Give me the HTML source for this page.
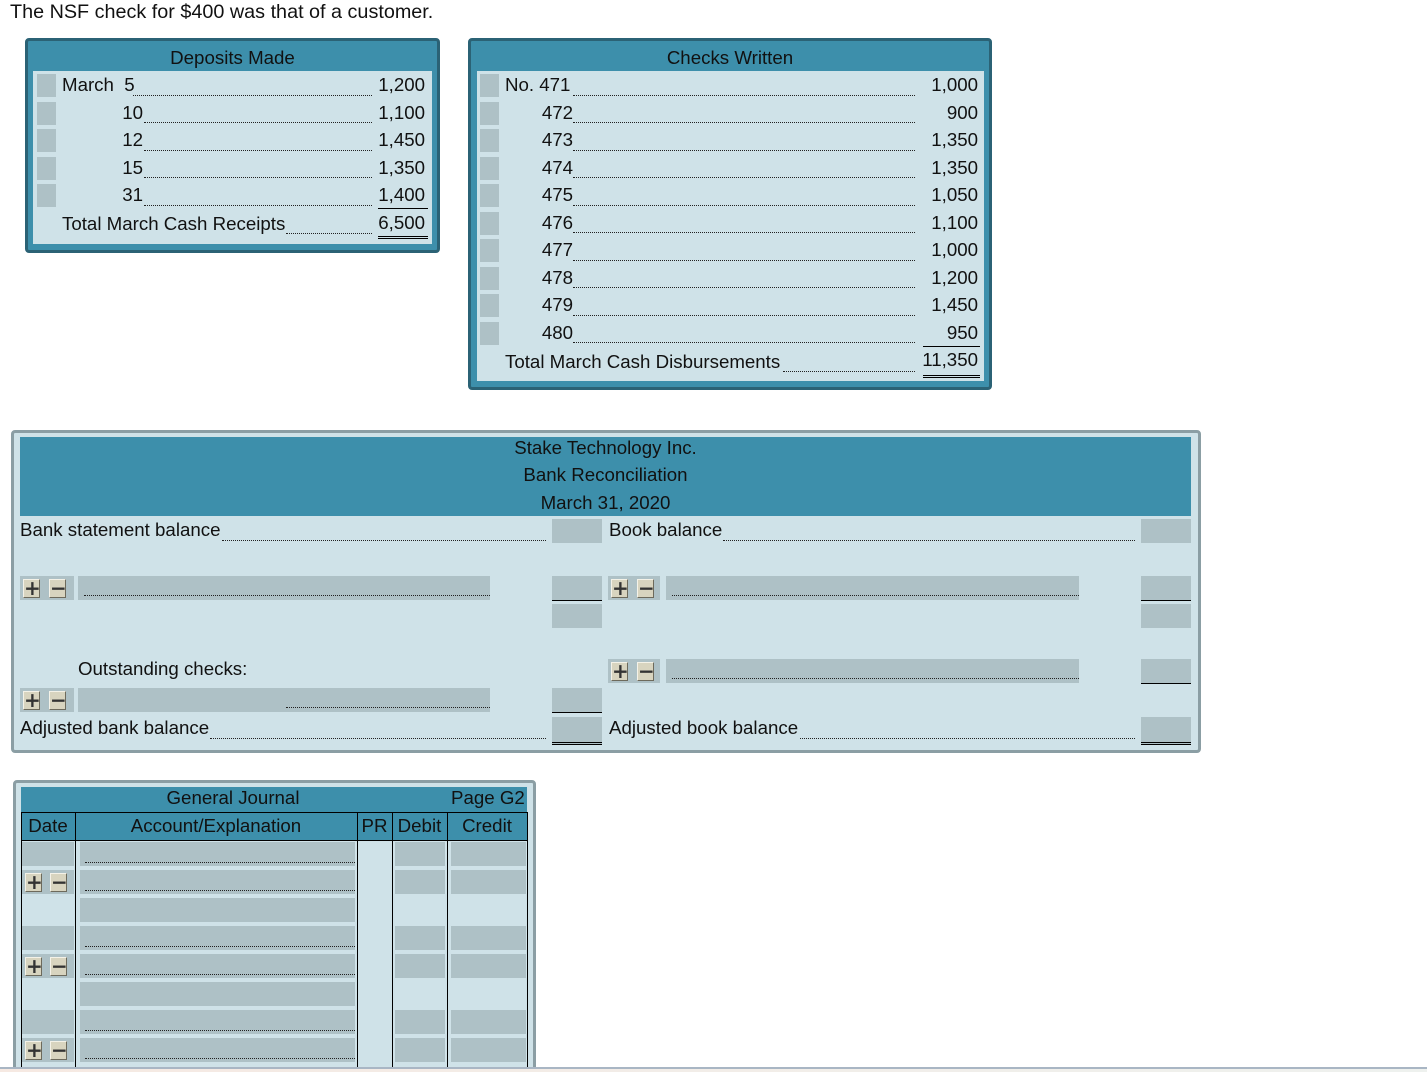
<!DOCTYPE html>
<html><head><meta charset="utf-8"><style>
*{margin:0;padding:0;box-sizing:border-box}
html,body{width:1427px;height:1072px;overflow:hidden}
body{position:relative;background:#fff;font-family:"Liberation Sans",sans-serif;font-size:18.7px;color:#111}
.a{position:absolute}
.g{position:absolute;background:#aec1c6}
.t{position:absolute;line-height:22px;white-space:nowrap}
.r{text-align:right}
.d{position:absolute;border-bottom:1px dotted #222;height:0}
.u{border-bottom:1px solid #000}
.uu{border-bottom:3px double #000}
.bg{position:absolute;background:#aec1c6;width:54px;height:24px}
.b{position:absolute;top:3px;width:17px;height:19px;background:#d8d4bf;border:1px solid;border-color:#f4f2e8 #6d6a5c #6d6a5c #f4f2e8;font:bold 20px/16px "DejaVu Sans",sans-serif;text-align:center;color:#333}
</style></head><body>

<div class="t" style="left:10px;top:1px;font-size:19.8px">The NSF check for $400 was that of a customer.</div>

<!-- Deposits -->
<div class="a" style="left:25px;top:38px;width:415px;height:215px;background:#3d8fab;border:3px solid #2b6275;border-radius:4px"></div>
<div class="t" style="left:25px;top:47px;width:415px;text-align:center">Deposits Made</div>
<div class="a" style="left:33px;top:71px;width:399px;height:173px;background:#cfe2e8"></div>
<div class="g" style="left:37px;top:74px;width:19px;height:23px"></div>
<div class="g" style="left:37px;top:102px;width:19px;height:23px"></div>
<div class="g" style="left:37px;top:129px;width:19px;height:23px"></div>
<div class="g" style="left:37px;top:157px;width:19px;height:23px"></div>
<div class="g" style="left:37px;top:184px;width:19px;height:23px"></div>
<div class="t" style="left:62px;top:74px">March&nbsp; 5</div>
<div class="t r" style="left:100px;width:43px;top:102px">10</div>
<div class="t r" style="left:100px;width:43px;top:129px">12</div>
<div class="t r" style="left:100px;width:43px;top:157px">15</div>
<div class="t r" style="left:100px;width:43px;top:184px">31</div>
<div class="t" style="left:62px;top:213px">Total March Cash Receipts</div>
<div class="d" style="left:133px;width:239px;top:95px"></div>
<div class="d" style="left:144px;width:228px;top:122px"></div>
<div class="d" style="left:144px;width:228px;top:150px"></div>
<div class="d" style="left:144px;width:228px;top:177px"></div>
<div class="d" style="left:144px;width:228px;top:205px"></div>
<div class="d" style="left:286px;width:86px;top:233px"></div>
<div class="t r" style="left:360px;width:65px;top:74px">1,200</div>
<div class="t r" style="left:360px;width:65px;top:102px">1,100</div>
<div class="t r" style="left:360px;width:65px;top:129px">1,450</div>
<div class="t r" style="left:360px;width:65px;top:157px">1,350</div>
<div class="t r" style="left:360px;width:65px;top:184px">1,400</div>
<div class="a u" style="left:378px;width:50px;top:208px"></div>
<div class="t r" style="left:360px;width:65px;top:212px">6,500</div>
<div class="a uu" style="left:378px;width:50px;top:236px;height:3px"></div>

<!-- Checks -->
<div class="a" style="left:468px;top:38px;width:524px;height:352px;background:#3d8fab;border:3px solid #2b6275;border-radius:4px"></div>
<div class="t" style="left:468px;top:47px;width:524px;text-align:center">Checks Written</div>
<div class="a" style="left:477px;top:71px;width:507px;height:310px;background:#cfe2e8"></div>
<div class="g" style="left:480px;top:74px;width:19px;height:23px"></div>
<div class="g" style="left:480px;top:102px;width:19px;height:23px"></div>
<div class="g" style="left:480px;top:129px;width:19px;height:23px"></div>
<div class="g" style="left:480px;top:157px;width:19px;height:23px"></div>
<div class="g" style="left:480px;top:184px;width:19px;height:23px"></div>
<div class="g" style="left:480px;top:212px;width:19px;height:23px"></div>
<div class="g" style="left:480px;top:239px;width:19px;height:23px"></div>
<div class="g" style="left:480px;top:267px;width:19px;height:23px"></div>
<div class="g" style="left:480px;top:294px;width:19px;height:23px"></div>
<div class="g" style="left:480px;top:322px;width:19px;height:23px"></div>
<div class="t" style="left:505px;top:74px">No. 471</div>
<div class="t r" style="left:520px;width:53px;top:102px">472</div>
<div class="t r" style="left:520px;width:53px;top:129px">473</div>
<div class="t r" style="left:520px;width:53px;top:157px">474</div>
<div class="t r" style="left:520px;width:53px;top:184px">475</div>
<div class="t r" style="left:520px;width:53px;top:212px">476</div>
<div class="t r" style="left:520px;width:53px;top:239px">477</div>
<div class="t r" style="left:520px;width:53px;top:267px">478</div>
<div class="t r" style="left:520px;width:53px;top:294px">479</div>
<div class="t r" style="left:520px;width:53px;top:322px">480</div>
<div class="t" style="left:505px;top:351px">Total March Cash Disbursements</div>
<div class="d" style="left:573px;width:342px;top:95px"></div>
<div class="d" style="left:573px;width:342px;top:122px"></div>
<div class="d" style="left:573px;width:342px;top:150px"></div>
<div class="d" style="left:573px;width:342px;top:177px"></div>
<div class="d" style="left:573px;width:342px;top:205px"></div>
<div class="d" style="left:573px;width:342px;top:232px"></div>
<div class="d" style="left:573px;width:342px;top:260px"></div>
<div class="d" style="left:573px;width:342px;top:287px"></div>
<div class="d" style="left:573px;width:342px;top:315px"></div>
<div class="d" style="left:573px;width:342px;top:342px"></div>
<div class="d" style="left:783px;width:132px;top:371px"></div>
<div class="t r" style="left:900px;width:78px;top:74px">1,000</div>
<div class="t r" style="left:900px;width:78px;top:102px">900</div>
<div class="t r" style="left:900px;width:78px;top:129px">1,350</div>
<div class="t r" style="left:900px;width:78px;top:157px">1,350</div>
<div class="t r" style="left:900px;width:78px;top:184px">1,050</div>
<div class="t r" style="left:900px;width:78px;top:212px">1,100</div>
<div class="t r" style="left:900px;width:78px;top:239px">1,000</div>
<div class="t r" style="left:900px;width:78px;top:267px">1,200</div>
<div class="t r" style="left:900px;width:78px;top:294px">1,450</div>
<div class="t r" style="left:900px;width:78px;top:322px">950</div>
<div class="a u" style="left:923px;width:57px;top:346px"></div>
<div class="t r" style="left:900px;width:78px;top:349px">11,350</div>
<div class="a uu" style="left:923px;width:57px;top:375px;height:3px"></div>

<!-- Reconciliation -->
<div class="a" style="left:11px;top:430px;width:1190px;height:323px;background:#cfe2e8;border:3px solid #8b9ea4;border-radius:4px"></div>
<div class="a" style="left:20px;top:437px;width:1171px;height:79px;background:#3d8fab"></div>
<div class="t" style="left:20px;width:1171px;text-align:center;top:437px">Stake Technology Inc.</div>
<div class="t" style="left:20px;width:1171px;text-align:center;top:464px">Bank Reconciliation</div>
<div class="t" style="left:20px;width:1171px;text-align:center;top:492px">March 31, 2020</div>

<div class="t" style="left:20px;top:519px">Bank statement balance</div>
<div class="d" style="left:222px;width:324px;top:540px"></div>
<div class="t" style="left:609px;top:519px">Book balance</div>
<div class="d" style="left:723px;width:412px;top:540px"></div>

<div class="g" style="left:552px;top:519px;width:50px;height:24px"></div>
<div class="g u" style="left:552px;top:576px;width:50px;height:25px"></div>
<div class="g" style="left:552px;top:604px;width:50px;height:24px"></div>
<div class="g u" style="left:552px;top:688px;width:50px;height:25px"></div>
<div class="g uu" style="left:552px;top:717px;width:50px;height:28px"></div>
<div class="g" style="left:1141px;top:519px;width:50px;height:24px"></div>
<div class="g u" style="left:1141px;top:576px;width:50px;height:25px"></div>
<div class="g" style="left:1141px;top:604px;width:50px;height:24px"></div>
<div class="g u" style="left:1141px;top:659px;width:50px;height:25px"></div>
<div class="g uu" style="left:1141px;top:717px;width:50px;height:28px"></div>

<div class="bg" style="left:20px;top:576px"><div class="b" style="left:3px">+</div><div class="b" style="left:29px">−</div></div>
<div class="g" style="left:78px;top:576px;width:412px;height:24px"></div>
<div class="d" style="left:84px;width:406px;top:595px"></div>
<div class="t" style="left:78px;top:658px">Outstanding checks:</div>
<div class="bg" style="left:20px;top:688px"><div class="b" style="left:3px">+</div><div class="b" style="left:29px">−</div></div>
<div class="g" style="left:78px;top:688px;width:412px;height:24px"></div>
<div class="d" style="left:286px;width:204px;top:707px"></div>
<div class="t" style="left:20px;top:717px">Adjusted bank balance</div>
<div class="d" style="left:210px;width:336px;top:738px"></div>

<div class="bg" style="left:608px;top:576px;width:52px"><div class="b" style="left:3px">+</div><div class="b" style="left:29px">−</div></div>
<div class="g" style="left:666px;top:576px;width:413px;height:24px"></div>
<div class="d" style="left:672px;width:407px;top:595px"></div>
<div class="bg" style="left:608px;top:659px;width:52px"><div class="b" style="left:3px">+</div><div class="b" style="left:29px">−</div></div>
<div class="g" style="left:666px;top:659px;width:413px;height:24px"></div>
<div class="d" style="left:672px;width:407px;top:678px"></div>
<div class="t" style="left:609px;top:717px">Adjusted book balance</div>
<div class="d" style="left:800px;width:335px;top:738px"></div>

<!-- Journal -->
<div class="a" style="left:13px;top:780px;width:523px;height:300px;background:#cfe2e8;border:3px solid #8b9ea4;border-radius:4px"></div>
<div class="a" style="left:21px;top:787px;width:506px;height:53px;background:#3d8fab"></div>
<div class="t" style="left:21px;width:424px;text-align:center;top:787px">General Journal</div>
<div class="t" style="left:451px;top:787px">Page G2</div>
<div class="a" style="left:21px;top:812px;width:506px;height:1px;background:#000"></div>
<div class="a" style="left:21px;top:840px;width:506px;height:1px;background:#000"></div>
<div class="t" style="left:21px;width:54px;text-align:center;top:815px">Date</div>
<div class="t" style="left:75px;width:282px;text-align:center;top:815px">Account/Explanation</div>
<div class="t" style="left:357px;width:35px;text-align:center;top:815px">PR</div>
<div class="t" style="left:392px;width:55px;text-align:center;top:815px">Debit</div>
<div class="t" style="left:447px;width:80px;text-align:center;top:815px">Credit</div>

<div class="g" style="left:22px;top:842px;width:52px;height:24px"></div>
<div class="g" style="left:22px;top:926px;width:52px;height:24px"></div>
<div class="g" style="left:22px;top:1010px;width:52px;height:24px"></div>
<div class="bg" style="left:22px;top:870px;width:52px"><div class="b" style="left:3px">+</div><div class="b" style="left:28px">−</div></div>
<div class="bg" style="left:22px;top:954px;width:52px"><div class="b" style="left:3px">+</div><div class="b" style="left:28px">−</div></div>
<div class="bg" style="left:22px;top:1038px;width:52px"><div class="b" style="left:3px">+</div><div class="b" style="left:28px">−</div></div>

<div class="g" style="left:80px;top:842px;width:275px;height:24px"></div>
<div class="g" style="left:80px;top:870px;width:275px;height:24px"></div>
<div class="g" style="left:80px;top:898px;width:275px;height:24px"></div>
<div class="g" style="left:80px;top:926px;width:275px;height:24px"></div>
<div class="g" style="left:80px;top:954px;width:275px;height:24px"></div>
<div class="g" style="left:80px;top:982px;width:275px;height:24px"></div>
<div class="g" style="left:80px;top:1010px;width:275px;height:24px"></div>
<div class="g" style="left:80px;top:1038px;width:275px;height:24px"></div>
<div class="d" style="left:85px;width:270px;top:862px"></div>
<div class="d" style="left:85px;width:270px;top:890px"></div>
<div class="d" style="left:85px;width:270px;top:946px"></div>
<div class="d" style="left:85px;width:270px;top:974px"></div>
<div class="d" style="left:85px;width:270px;top:1030px"></div>
<div class="d" style="left:85px;width:270px;top:1058px"></div>

<div class="g" style="left:395px;top:842px;width:50px;height:24px"></div>
<div class="g" style="left:395px;top:870px;width:50px;height:24px"></div>
<div class="g" style="left:395px;top:926px;width:50px;height:24px"></div>
<div class="g" style="left:395px;top:954px;width:50px;height:24px"></div>
<div class="g" style="left:395px;top:1010px;width:50px;height:24px"></div>
<div class="g" style="left:395px;top:1038px;width:50px;height:24px"></div>
<div class="g" style="left:451px;top:842px;width:75px;height:24px"></div>
<div class="g" style="left:451px;top:870px;width:75px;height:24px"></div>
<div class="g" style="left:451px;top:926px;width:75px;height:24px"></div>
<div class="g" style="left:451px;top:954px;width:75px;height:24px"></div>
<div class="g" style="left:451px;top:1010px;width:75px;height:24px"></div>
<div class="g" style="left:451px;top:1038px;width:75px;height:24px"></div>

<div class="a" style="left:21px;top:812px;width:1px;height:256px;background:#000"></div>
<div class="a" style="left:75px;top:812px;width:1px;height:256px;background:#000"></div>
<div class="a" style="left:357px;top:812px;width:1px;height:256px;background:#000"></div>
<div class="a" style="left:392px;top:812px;width:1px;height:256px;background:#000"></div>
<div class="a" style="left:447px;top:812px;width:1px;height:256px;background:#000"></div>
<div class="a" style="left:527px;top:812px;width:1px;height:256px;background:#000"></div>

<div class="a" style="left:0;top:1067px;width:1427px;height:2px;background:#a9b6c4"></div>
<div class="a" style="left:0;top:1069px;width:1427px;height:3px;background:linear-gradient(90deg,#f6e9e2,#eef1ee)"></div>
</body></html>
